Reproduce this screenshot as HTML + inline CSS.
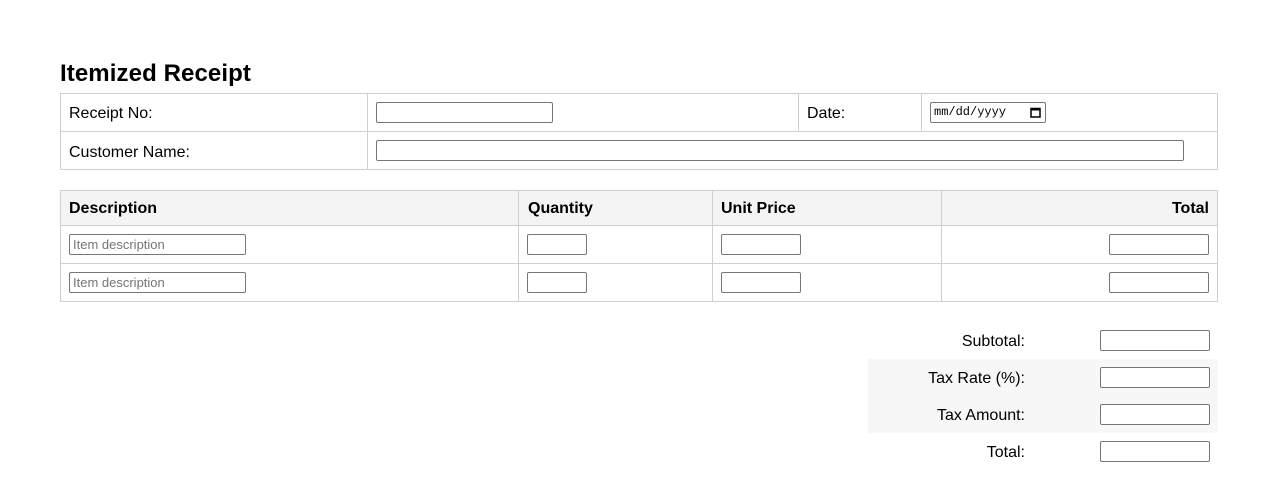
<!DOCTYPE html>
<html><head><style>
*{box-sizing:border-box;margin:0;padding:0}
body{width:1278px;height:501px;background:#fff;font-family:"Liberation Sans",Arial,sans-serif;font-size:16px;color:#000;position:relative;overflow:hidden}
.a{position:absolute}
.b{position:absolute;border:1px solid #d0d0d0}
.h{position:absolute;background:#d0d0d0}
.in{position:absolute;border:1px solid #767676;border-radius:2px;background:#fff;height:21px}
.t{position:absolute;line-height:20px;margin-top:2px}
.ph{font-size:13px;color:#757575;padding-left:3px;line-height:19px}
.r{text-align:right}
</style></head><body>
<div class="t" style="left:60px;top:59px;font-size:24px;font-weight:bold;line-height:26px;letter-spacing:0.1px">Itemized Receipt</div>

<div class="b" style="left:60px;top:93px;width:1158px;height:77px"></div>
<div class="h" style="left:60px;top:131px;width:1158px;height:1px"></div>
<div class="h" style="left:367px;top:93px;width:1px;height:77px"></div>
<div class="h" style="left:798px;top:93px;width:1px;height:38px"></div>
<div class="h" style="left:921px;top:93px;width:1px;height:38px"></div>
<div class="t" style="left:69px;top:102px">Receipt No:</div>
<div class="t" style="left:807px;top:102px">Date:</div>
<div class="t" style="left:69px;top:141px">Customer Name:</div>
<div class="in" style="left:376px;top:102px;width:177px"></div>
<div class="in" style="left:930px;top:102px;width:116px;font-family:'Liberation Mono',monospace;font-size:12px;line-height:19px;padding-left:3px">mm/dd/yyyy
<svg class="a" style="left:99px;top:4px" width="11" height="11" viewBox="0 0 11 11"><rect x="1" y="1.5" width="9" height="8.5" fill="none" stroke="#000" stroke-width="1.5"/><rect x="1" y="1" width="9" height="2.5" fill="#000"/></svg></div>
<div class="in" style="left:376px;top:140px;width:808px"></div>

<div class="a" style="left:60px;top:190px;width:1158px;height:35px;background:#f4f4f4"></div>
<div class="b" style="left:60px;top:190px;width:1158px;height:112px"></div>
<div class="h" style="left:60px;top:225px;width:1158px;height:1px"></div>
<div class="h" style="left:60px;top:263px;width:1158px;height:1px"></div>
<div class="h" style="left:518px;top:190px;width:1px;height:112px"></div>
<div class="h" style="left:712px;top:190px;width:1px;height:112px"></div>
<div class="h" style="left:941px;top:190px;width:1px;height:112px"></div>
<div class="t" style="left:69px;top:197px;font-weight:bold">Description</div>
<div class="t" style="left:528px;top:197px;font-weight:bold">Quantity</div>
<div class="t" style="left:721px;top:197px;font-weight:bold">Unit Price</div>
<div class="t r" style="left:1000px;width:209px;top:197px;font-weight:bold">Total</div>
<div class="in ph" style="left:69px;top:234px;width:177px">Item description</div>
<div class="in" style="left:527px;top:234px;width:60px"></div>
<div class="in" style="left:721px;top:234px;width:80px"></div>
<div class="in" style="left:1109px;top:234px;width:100px"></div>
<div class="in ph" style="left:69px;top:272px;width:177px">Item description</div>
<div class="in" style="left:527px;top:272px;width:60px"></div>
<div class="in" style="left:721px;top:272px;width:80px"></div>
<div class="in" style="left:1109px;top:272px;width:100px"></div>

<div class="a" style="left:868px;top:359px;width:350px;height:74px;background:#f7f7f7"></div>
<div class="t r" style="left:825px;width:200px;top:330px">Subtotal:</div>
<div class="t r" style="left:825px;width:200px;top:367px">Tax Rate (%):</div>
<div class="t r" style="left:825px;width:200px;top:404px">Tax Amount:</div>
<div class="t r" style="left:825px;width:200px;top:441px">Total:</div>
<div class="in" style="left:1100px;top:330px;width:110px"></div>
<div class="in" style="left:1100px;top:367px;width:110px"></div>
<div class="in" style="left:1100px;top:404px;width:110px"></div>
<div class="in" style="left:1100px;top:441px;width:110px"></div>
</body></html>
